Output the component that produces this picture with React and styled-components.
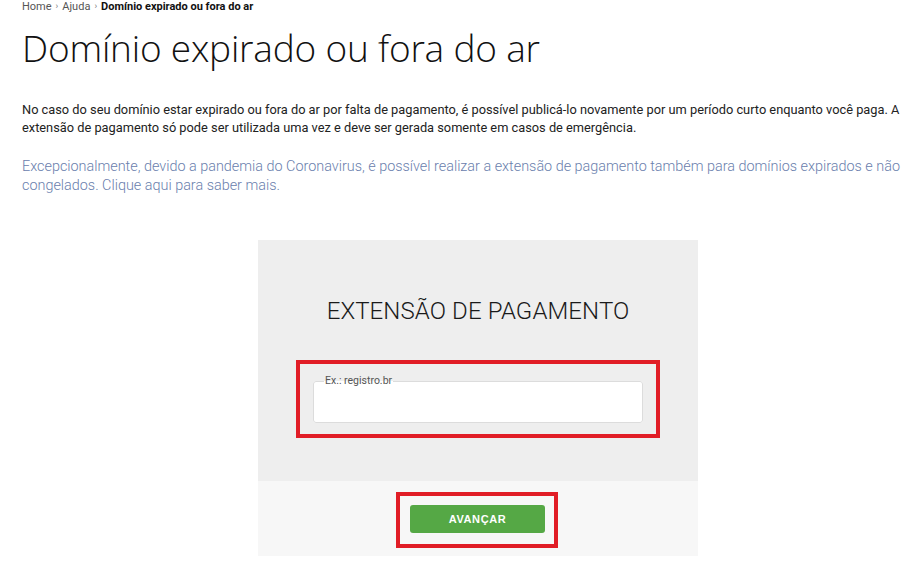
import React from "react";
import styled, { createGlobalStyle } from "styled-components";

const Global = createGlobalStyle`
  html, body { margin: 0; padding: 0; background: #fff; }
  body { font-family: Roboto, "Liberation Sans", Arial, sans-serif; color: #222; }
`;

const Page = styled.div`
  padding: 0 2px 0 22px;
`;

const Breadcrumb = styled.nav`
  display: flex;
  align-items: center;
  gap: 4px;
  font-size: 11px;
  line-height: 13px;
  color: #555;
`;

const Crumb = styled.span`
  font-weight: ${(p) => (p.$current ? 700 : 400)};
  color: ${(p) => (p.$current ? "#111" : "#555")};
`;

const Sep = styled.span`
  font-size: 9px;
  color: #777;
`;

const Title = styled.h1`
  margin: 13px 0 0;
  font-family: "Open Sans", Roboto, sans-serif;
  font-weight: 300;
  font-size: 37px;
  line-height: 44px;
  color: #111;
  letter-spacing: -0.2px;
`;

const Lead = styled.p`
  margin: 31px 0 0;
  font-size: 12.8px;
  line-height: 18px;
  color: #222;
`;

const Notice = styled.p`
  margin: 20px 0 0;
  font-size: 14.4px;
  line-height: 19px;
  font-weight: 300;
  color: #6a80ad;
`;

const Card = styled.section`
  width: 440px;
  margin: 45px 0 0 236px;
  display: flex;
  flex-direction: column;
`;

const CardBody = styled.div`
  background: #eeeeee;
  height: 241px;
  display: flex;
  flex-direction: column;
  align-items: center;
  padding-top: 56px;
  box-sizing: border-box;
`;

const CardTitle = styled.h2`
  margin: 0;
  font-size: 24px;
  line-height: 30px;
  font-weight: 300;
  color: #1a1a1a;
  letter-spacing: 0.1px;
`;

const Highlight = styled.div`
  border: 4px solid #e11d26;
  box-sizing: border-box;
  display: flex;
  justify-content: center;
`;

const InputHighlight = styled(Highlight)`
  margin-top: 34px;
  width: 364px;
  height: 78px;
  padding: 11px 13px 0;
`;

const Field = styled.fieldset`
  margin: 0;
  width: 100%;
  height: 48px;
  box-sizing: border-box;
  border: 1px solid #dcdcdc;
  border-radius: 3px;
  background: #fff;
  padding: 0 10px;
`;

const Legend = styled.legend`
  font-size: 10.5px;
  line-height: 12px;
  color: #555;
  padding: 0 1px;
  margin-left: 0;
`;

const CardFooter = styled.div`
  background: #f7f7f7;
  height: 75px;
  display: flex;
  justify-content: center;
  padding-top: 11px;
  box-sizing: border-box;
`;

const ButtonHighlight = styled(Highlight)`
  width: 162px;
  height: 56px;
  padding: 9px 9px 0 10px;
  justify-content: flex-start;
  margin-left: -2px;
`;

const Button = styled.button`
  width: 135px;
  height: 28px;
  border: 0;
  border-radius: 3px;
  background: #55a845;
  color: #fff;
  font-family: "Liberation Sans", Arial, sans-serif;
  font-weight: 700;
  font-size: 11px;
  letter-spacing: 0.6px;
  cursor: pointer;
`;

export default function App() {
  return (
    <>
      <Global />
      <Page>
        <Breadcrumb>
          <Crumb>Home</Crumb>
          <Sep>›</Sep>
          <Crumb>Ajuda</Crumb>
          <Sep>›</Sep>
          <Crumb $current>Domínio expirado ou fora do ar</Crumb>
        </Breadcrumb>
        <Title>Domínio expirado ou fora do ar</Title>
        <Lead>
          No caso do seu domínio estar expirado ou fora do ar por falta de pagamento, é possível publicá-lo novamente por um período curto enquanto você paga. A extensão de pagamento só pode ser utilizada uma vez e deve ser gerada somente em casos de emergência.
        </Lead>
        <Notice>
          Excepcionalmente, devido a pandemia do Coronavirus, é possível realizar a extensão de pagamento também para domínios expirados e não congelados. Clique aqui para saber mais.
        </Notice>
        <Card>
          <CardBody>
            <CardTitle>EXTENSÃO DE PAGAMENTO</CardTitle>
            <InputHighlight>
              <Field>
                <Legend>Ex.: registro.br</Legend>
              </Field>
            </InputHighlight>
          </CardBody>
          <CardFooter>
            <ButtonHighlight>
              <Button>AVANÇAR</Button>
            </ButtonHighlight>
          </CardFooter>
        </Card>
      </Page>
    </>
  );
}
